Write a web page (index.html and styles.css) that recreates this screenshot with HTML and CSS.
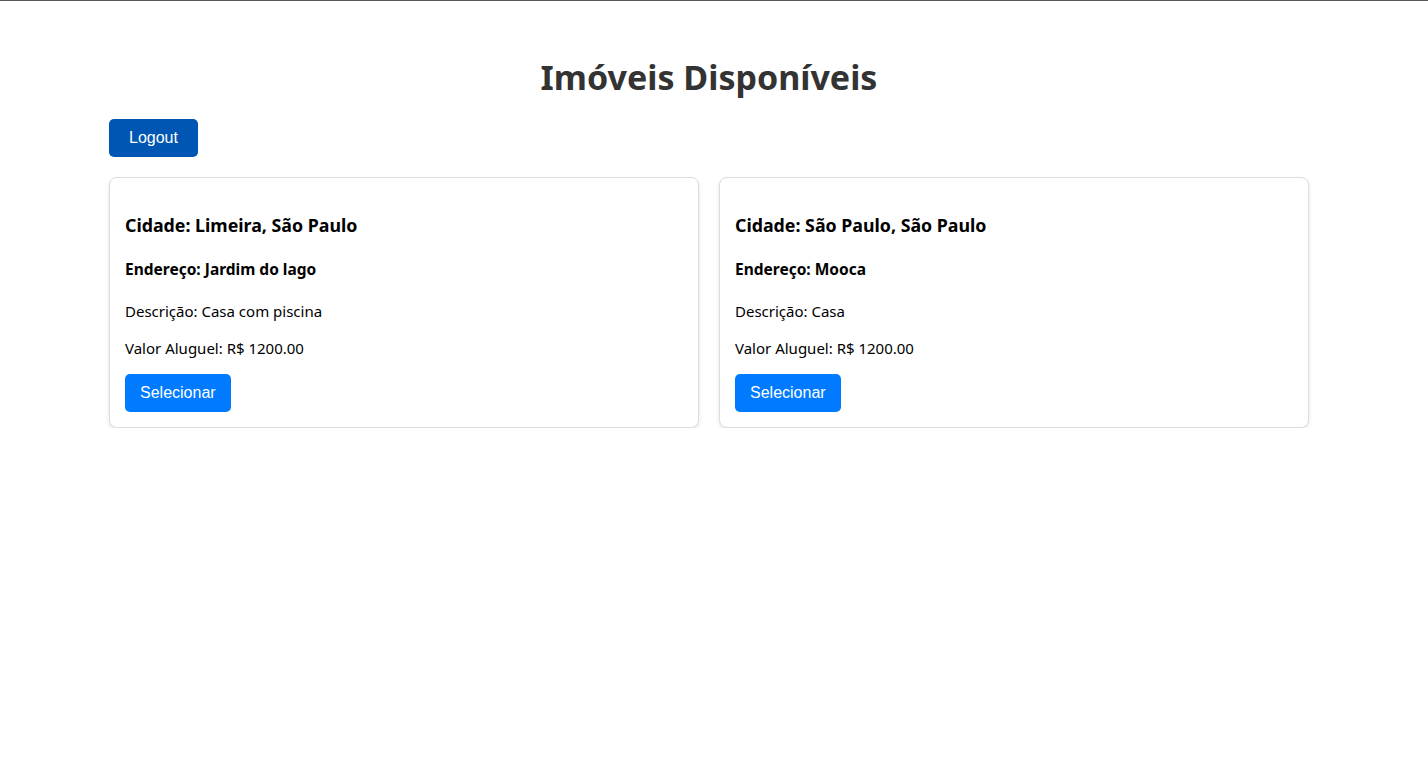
FILE: index.html
```html
<!DOCTYPE html>
<html lang="pt-BR">
<head>
<meta charset="UTF-8">
<title>Imóveis Disponíveis</title>
<link rel="stylesheet" href="styles.css">
</head>
<body>
<div class="page">
  <h1 class="title">Imóveis Disponíveis</h1>
  <button class="logout">Logout</button>
  <div class="grid">
    <div class="card">
      <h3>Cidade: Limeira, São Paulo</h3>
      <h4>Endereço: Jardim do lago</h4>
      <p>Descrição: Casa com piscina</p>
      <p class="price">Valor Aluguel: R$ 1200.00</p>
      <button class="select">Selecionar</button>
    </div>
    <div class="card">
      <h3>Cidade: São Paulo, São Paulo</h3>
      <h4>Endereço: Mooca</h4>
      <p>Descrição: Casa</p>
      <p class="price">Valor Aluguel: R$ 1200.00</p>
      <button class="select">Selecionar</button>
    </div>
  </div>
</div>
</body>
</html>
```

FILE: styles.css
```css
html, body {
  margin: 0;
  padding: 0;
  background: #fff;
}
body {
  border-top: 1px solid #5a5a5a;
  font-family: "Noto Sans", "Open Sans", sans-serif;
  font-size: 16px;
  color: #000;
  padding-right: 10px;
}
.page {
  max-width: 1200px;
  margin: 0 auto;
  padding-top: 52px;
}
.title {
  margin: 0 0 18px;
  text-align: center;
  font-size: 34px;
  line-height: 48px;
  font-weight: 700;
  color: #333;
}
button {
  font-family: "Liberation Sans", Arial, sans-serif;
  font-size: 16px;
  line-height: 18px;
  color: #fff;
  border: none;
  border-radius: 5px;
  cursor: pointer;
}
.logout {
  display: block;
  background: #0056b3;
  padding: 10px 20px;
  margin-bottom: 20px;
}
.grid {
  display: grid;
  grid-template-columns: 1fr 1fr;
  gap: 20px;
}
.card {
  border: 1px solid #ddd;
  border-radius: 8px;
  padding: 15px;
  box-shadow: 0 2px 4px rgba(0,0,0,0.1);
  background: #fff;
}
.card h3 {
  font-size: 17.8px;
  line-height: 26px;
  margin: 18.72px 0;
  font-weight: 700;
}
.card h4 {
  font-size: 15.5px;
  line-height: 21.3px;
  margin: 21.28px 0 20.28px;
  font-weight: 700;
}
.card p {
  font-size: 15px;
  line-height: 21.3px;
  margin: 16px 0;
}
.card .price {
  margin-bottom: 15px;
}
.select {
  display: block;
  background: #007bff;
  padding: 10px 15px;
}
```
